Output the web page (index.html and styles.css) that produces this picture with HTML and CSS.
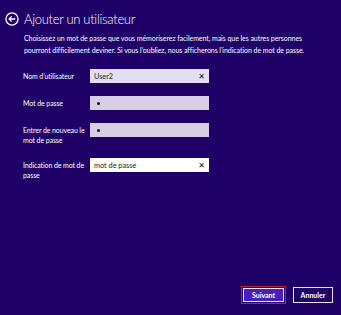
FILE: index.html
```html
<!DOCTYPE html>
<html lang="fr">
<head>
<meta charset="utf-8">
<link rel="stylesheet" href="styles.css">
</head>
<body>
<div class="page">
  <div class="header">
    <svg class="back" width="14" height="14" viewBox="0 0 14 14">
      <circle cx="7" cy="7" r="6.1" fill="none" stroke="#fff" stroke-width="1.3"/>
      <path d="M10.2 7H4.2M6.7 4.4L4.1 7l2.6 2.6" fill="none" stroke="#fff" stroke-width="1.3"/>
    </svg>
    <h1 class="title">Ajouter un utilisateur</h1>
  </div>
  <p class="desc">Choisissez un mot de passe que vous mémoriserez facilement, mais que les autres personnes pourront difficilement deviner. Si vous l’oubliez, nous afficherons l’indication de mot de passe.</p>
  <div class="form">
    <div class="label">Nom d’utilisateur</div>
    <div class="field field-light"><span class="val">User2</span><span class="clear">✕</span></div>
    <div class="label">Mot de passe</div>
    <div class="field field-mid"><span class="dot"></span></div>
    <div class="label">Entrer de nouveau le mot de passe</div>
    <div class="field field-mid"><span class="dot"></span></div>
    <div class="label">Indication de mot de passe</div>
    <div class="field field-focus"><span class="val">mot de passe</span><span class="clear">✕</span></div>
  </div>
  <div class="footer">
    <div class="btn-focus"><button class="btn btn-primary">Suivant</button></div>
    <button class="btn btn-secondary">Annuler</button>
  </div>
</div>
</body>
</html>
```

FILE: styles.css
```css
html, body {
  margin: 0;
  padding: 0;
  background: #1f0066;
}
body {
  font-family: Lato, "Open Sans", sans-serif;
  color: #fff;
}
.page {
  height: 315px;
  display: flex;
  flex-direction: column;
  box-sizing: border-box;
}
.header {
  display: flex;
  align-items: center;
  gap: 5px;
  padding: 10px 0 0 5px;
}
.back { display: block; }
.title {
  margin: 0;
  font-size: 13px;
  font-weight: 300;
  letter-spacing: -0.3px;
  line-height: 18px;
}
.desc {
  margin: 5px 30px 0 24px;
  font-size: 7px;
  letter-spacing: -0.06px;
  line-height: 11.5px;
}
.form {
  margin: 13px 0 0 23px;
  display: grid;
  grid-template-columns: 67px 119px;
  row-gap: 13px;
  align-items: start;
}
.label {
  font-size: 7px;
  letter-spacing: -0.1px;
  line-height: 10px;
  padding-top: 2px;
  padding-right: 2px;
}
.field {
  height: 14px;
  box-sizing: border-box;
  display: flex;
  align-items: center;
  padding: 0 4px 0 4px;
  color: #222;
  font-size: 7.3px;
}
.field-light { background: #e3def0; }
.field-mid { background: #d6cfe6; }
.field-focus { background: #ffffff; }
.val { flex: 1; }
.clear {
  font-family: "DejaVu Sans", sans-serif;
  font-size: 8px;
  font-weight: bold;
  color: #111;
}
.dot {
  width: 3px;
  height: 3px;
  border-radius: 50%;
  background: #111;
  margin-left: 3px;
}
.footer {
  margin-top: auto;
  display: flex;
  justify-content: flex-end;
  align-items: center;
  gap: 7px;
  padding: 0 8px 11px 0;
}
.btn-focus {
  border: 1.5px solid #b02a3a;
  padding: 1px;
  display: flex;
}
.btn {
  font-family: inherit;
  font-size: 7px;
  font-weight: 700;
  color: #fff;
  height: 14px;
  padding: 0;
  border: 1px solid #e8e4f4;
  cursor: pointer;
}
.btn-primary {
  width: 41px;
  background: #4a1fb8;
}
.btn-secondary {
  width: 40px;
  height: 16px;
  background: #1f0066;
}
```
